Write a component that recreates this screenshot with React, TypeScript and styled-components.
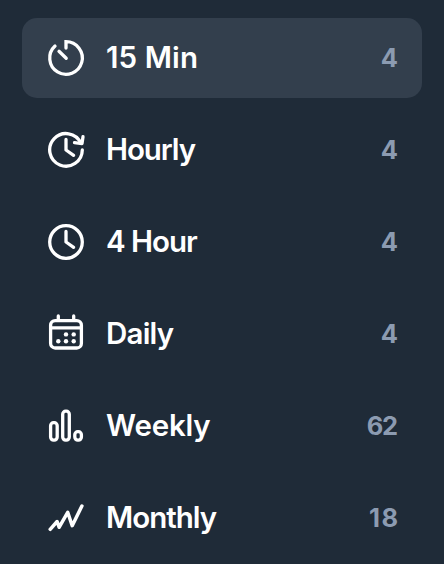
import React from "react";
import styled, {createGlobalStyle} from "styled-components";

const GlobalStyle = createGlobalStyle`
  body {
    margin: 0;
    background: #1f2b38;
    font-family: Inter, "Liberation Sans", sans-serif;
  }
`;

const Menu = styled.nav`
  display: flex;
  flex-direction: column;
  gap: 12px;
  box-sizing: border-box;
  height: 564px;
  padding: 18px 22px 0;
  overflow: hidden;
`;

const Item = styled.div<{$active?: boolean}>`
  display: flex;
  flex-shrink: 0;
  align-items: center;
  box-sizing: border-box;
  height: 80px;
  padding: 0 24px;
  border-radius: 15px;
  background: ${({$active}) => ($active ? "#333f4d" : "transparent")};
`;

const Icon = styled.svg`
  width: 40px;
  height: 40px;
  margin-right: 20px;
  fill: none;
  stroke: #fff;
  stroke-width: 3.3;
  stroke-linecap: round;
  stroke-linejoin: round;
`;

const Label = styled.span<{$spacing: number}>`
  flex: 1;
  padding-bottom: 2px;
  color: #fff;
  font-size: 29.5px;
  font-weight: 600;
  line-height: 40px;
  letter-spacing: ${({$spacing}) => $spacing}px;
`;

const Count = styled.span<{$spacing: number}>`
  color: #8c9bb1;
  font-size: 25.5px;
  font-weight: 700;
  line-height: 40px;
  letter-spacing: ${({$spacing}) => $spacing}px;
  margin-right: ${({$spacing}) => -$spacing}px;
`;

const icons = {
  timer: (
    <>
      <path d="M20 10V3.7A16.3 16.3 0 1 1 9 8" strokeLinejoin="miter" />
      <path d="M13 13.3l7.2 7" />
    </>
  ),
  hourly: (
    <>
      <path d="M36.3 20A16.3 16.3 0 1 1 34.8 13" />
      <path d="M37 6.7l-1 6.9-7.5-.9M20 9.4V20l7.6 5.3" />
    </>
  ),
  clock: (
    <>
      <circle cx="20" cy="20" r="16.3" />
      <path d="M20 9.4V20l7.6 5.3" />
    </>
  ),
  calendar: (
    <>
      <rect x="4.6" y="6.6" width="30.8" height="27.4" rx="4.6" />
      <path d="M4.6 13.8h30.8M12.3 1.9v4.5M27.7 1.9v4.5" />
      <g fill="#fff" stroke="none">
        <circle cx="20" cy="20.4" r="2.2" />
        <circle cx="27.7" cy="20.4" r="2.2" />
        <circle cx="12.3" cy="27.3" r="2.2" />
        <circle cx="20" cy="27.3" r="2.2" />
        <circle cx="27.7" cy="27.3" r="2.2" />
      </g>
    </>
  ),
  bars: (
    <>
      <rect x="4.6" y="16.7" width="6.6" height="17.4" rx="3" />
      <rect x="16.7" y="5.2" width="6.6" height="28.9" rx="3" />
      <rect x="28.8" y="25.7" width="6.6" height="8.4" rx="3" />
    </>
  ),
  trend: (
    <path
      d="M4.2 31.3l6.9-7.8 2 5.8 8.6-15 4.5 13.4L35.9 8"
      strokeWidth="3.5"
    />
  ),
};

const intervals: {
  name: string;
  icon: keyof typeof icons;
  count: number;
  spacing: number;
  countSpacing: number;
}[] = [
  {name: "15 Min", icon: "timer", count: 4, spacing: 0.1, countSpacing: 0},
  {name: "Hourly", icon: "hourly", count: 4, spacing: -1.1, countSpacing: 0},
  {name: "4 Hour", icon: "clock", count: 4, spacing: -1, countSpacing: 0},
  {name: "Daily", icon: "calendar", count: 4, spacing: -0.8, countSpacing: 0},
  {name: "Weekly", icon: "bars", count: 62, spacing: -0.2, countSpacing: -1.4},
  {name: "Monthly", icon: "trend", count: 18, spacing: -1, countSpacing: 1.4},
];

export default function App() {
  return (
    <>
      <GlobalStyle />
      <Menu>
        {intervals.map(({name, icon, count, spacing, countSpacing}, index) => (
          <Item key={name} $active={index === 0}>
            <Icon viewBox="0 0 40 40">{icons[icon]}</Icon>
            <Label $spacing={spacing}>{name}</Label>
            <Count $spacing={countSpacing}>{count}</Count>
          </Item>
        ))}
      </Menu>
    </>
  );
}
